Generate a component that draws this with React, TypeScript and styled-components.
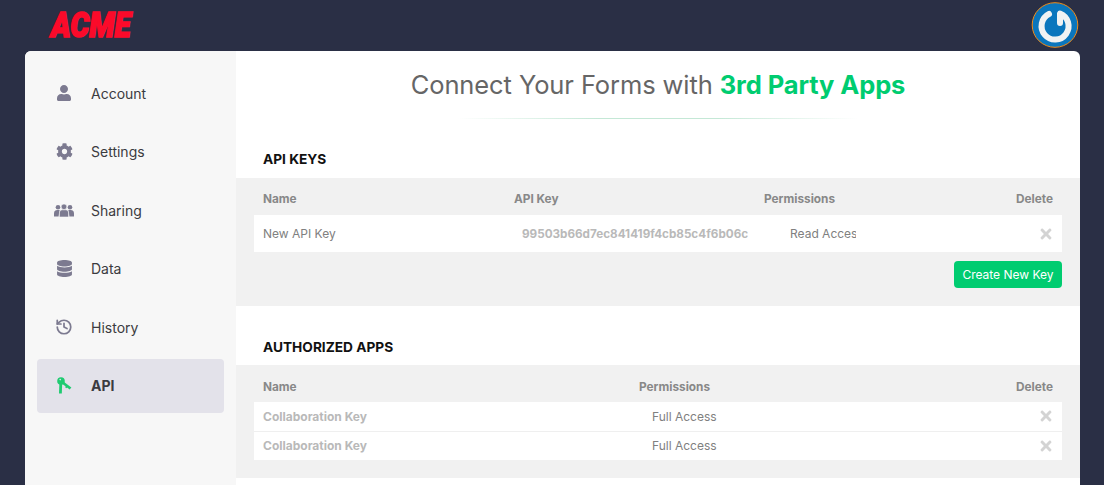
import React from 'react';
import styled, { createGlobalStyle } from 'styled-components';
import { FaCog, FaDatabase, FaTimes, FaUser } from 'react-icons/fa';
import { History } from 'lucide-react';

const GlobalStyle = createGlobalStyle`
    html, body {
        margin: 0;
        height: 100%;
        overflow: hidden;
        background: #2a2f45;
        font-family: Inter, "Noto Sans", sans-serif;
    }
`;

const SharingIcon = () => (
    <svg width="20" height="13" viewBox="0 0 20 13" fill="currentColor">
        <circle cx="4" cy="3.2" r="2.3" />
        <circle cx="16" cy="3.2" r="2.3" />
        <path d="M0 12.5V9.2C0 7 1.6 6 3.2 6h2.4L4.6 12.5z" />
        <path d="M20 12.5V9.2C20 7 18.4 6 16.8 6h-2.4l1 6.500z" />
        <circle cx="10" cy="2.800" r="2.800" fill="currentColor" stroke="#f7f7f7" strokeWidth="0.6" />
        <path d="M5.400 13V9c0-2 1.600-3.200 3.200-3.200h2.800c1.600 0 3.200 1.200 3.200 3.200v4z" stroke="#f7f7f7" strokeWidth="0.6" />
    </svg>
);

const KeysIcon = () => (
    <svg width="15" height="17" viewBox="0 0 15 17" fill="currentColor" stroke="currentColor">
        <circle cx="4" cy="4" r="3.800" stroke="none" />
        <path d="M5 5l8.500 6.500" strokeWidth="2.800" />
        <path d="M3.800 6l-.4 10.500" strokeWidth="2.800" />
        <path d="M10 9l-1.200 1.800" strokeWidth="1.600" />
        <circle cx="3.200" cy="2.600" r="0.800" fill="#e3e2ea" stroke="none" />
    </svg>
);

const PowerLogo = () => (
    <svg width="48" height="46" viewBox="0 0 48 46">
        <ellipse cx="24" cy="23" rx="22.8" ry="22.300" fill="#0a76bd" stroke="#f08c1a" strokeWidth="1" />
        <path d="M18 12A13.500 13.500 0 1 0 29 11.500V21" fill="none" stroke="#f0f2f3" strokeWidth="6" strokeLinecap="round" strokeLinejoin="round" />
    </svg>
);

const navItems = [
    { label: 'Account', icon: <FaUser size={16} /> },
    { label: 'Settings', icon: <FaCog size={17} /> },
    { label: 'Sharing', icon: <SharingIcon /> },
    { label: 'Data', icon: <FaDatabase size={17} /> },
    { label: 'History', icon: <History size={18} strokeWidth={2.3} /> },
    { label: 'API', icon: <KeysIcon />, active: true },
];

const App = () => (
    <>
        <GlobalStyle />
        <Page>
            <TopBar>
                <Logo>ACME</Logo>
                <Avatar>
                    <PowerLogo />
                </Avatar>
            </TopBar>
            <Card>
                <Sidebar>
                    {navItems.map((item) => (
                        <NavItem key={item.label} $active={item.active}>
                            <NavIcon $active={item.active}>{item.icon}</NavIcon>
                            {item.label}
                        </NavItem>
                    ))}
                </Sidebar>
                <Main>
                    <Title>
                        Connect Your Forms with <strong>3rd Party Apps</strong>
                    </Title>
                    <Divider />
                    <SectionTitle>API KEYS</SectionTitle>
                    <Panel $height={128}>
                        <Table $top={9}>
                            <HeadRow $columns="251px 250px 1fr auto" $bottom={4}>
                                <span>Name</span>
                                <span>API Key</span>
                                <span>Permissions</span>
                                <span>Delete</span>
                            </HeadRow>
                            <Row $columns="259px 268px 1fr auto" $height={37}>
                                <NameCell>New API Key</NameCell>
                                <KeyCell>99503b66d7ec841419f4cb85c4f6b06c</KeyCell>
                                <ClippedCell>Read Access</ClippedCell>
                                <DeleteIcon />
                            </Row>
                        </Table>
                        <Actions>
                            <CreateButton>Create New Key</CreateButton>
                        </Actions>
                    </Panel>
                    <SectionTitle $top={33}>AUTHORIZED APPS</SectionTitle>
                    <Panel $height={113}>
                        <Table $top={10}>
                            <HeadRow $columns="376px 1fr auto" $bottom={3}>
                                <span>Name</span>
                                <span>Permissions</span>
                                <span>Delete</span>
                            </HeadRow>
                            <Row $columns="389px 1fr auto" $height={30} $compact $divided>
                                <KeyName>Collaboration Key</KeyName>
                                <NameCell>Full Access</NameCell>
                                <DeleteIcon />
                            </Row>
                            <Row $columns="389px 1fr auto" $height={28} $compact>
                                <KeyName>Collaboration Key</KeyName>
                                <NameCell>Full Access</NameCell>
                                <DeleteIcon />
                            </Row>
                        </Table>
                    </Panel>
                </Main>
            </Card>
        </Page>
    </>
);

const Page = styled.div`
    height: 485px;
    overflow: hidden;
    background: #2a2f45;
`;

const TopBar = styled.header`
    height: 51px;
    display: flex;
    justify-content: space-between;
    padding: 0 25px 0 51px;
`;

const Logo = styled.div`
    width: 82px;
    height: 51px;
    color: #fb0a2a;
    font-family: Roboto, sans-serif;
    font-size: 35px;
    font-weight: 900;
    font-style: italic;
    line-height: 51px;
    -webkit-text-stroke: 1.6px #fb0a2a;
    transform: scaleX(0.85);
    transform-origin: left center;
`;

const Avatar = styled.div`
    padding-top: 2px;
`;

const Card = styled.div`
    display: flex;
    height: 434px;
    margin: 0 24px 0 25px;
    border-radius: 6px 6px 0 0;
    overflow: hidden;
    background: #fff;
`;

const Sidebar = styled.nav`
    width: 187px;
    flex-shrink: 0;
    display: flex;
    flex-direction: column;
    gap: 4.5px;
    padding: 15px 12px;
    background: #f7f7f7;
`;

const NavItem = styled.div<{ $active?: boolean }>`
    height: 54px;
    display: flex;
    align-items: center;
    padding-left: 15px;
    border-radius: 4px;
    background: ${({ $active }) => ($active ? '#e3e2ea' : 'transparent')};
    color: #3b3b40;
    font-size: 14px;
    font-weight: ${({ $active }) => ($active ? 700 : 400)};
`;

const NavIcon = styled.span<{ $active?: boolean }>`
    width: 24px;
    margin-right: 15px;
    display: flex;
    justify-content: center;
    color: ${({ $active }) => ($active ? '#1fcb71' : '#7c7a90')};
`;

const Main = styled.main`
    flex: 1;
    min-width: 0;
`;

const Title = styled.h1`
    margin: 0;
    padding-top: 17px;
    height: 49px;
    box-sizing: border-box;
    text-align: center;
    color: #666;
    font-size: 25.5px;
    line-height: 33px;
    font-weight: 400;
    letter-spacing: -0.1px;

    strong {
        color: #00cc70;
        font-weight: 700;
    }
`;

const Divider = styled.div`
    width: 400px;
    height: 1px;
    margin: 18px auto 0;
    background: linear-gradient(90deg, transparent, #c4e8d6 35%, #c4e8d6 65%, transparent);
`;

const SectionTitle = styled.h2<{ $top?: number }>`
    margin: ${({ $top }) => $top ?? 32}px 0 ${({ $top }) => ($top ? 9 : 10)}px 27px;
    color: #111;
    font-size: 13.7px;
    line-height: 17px;
    font-weight: 700;
`;

const Panel = styled.section<{ $height: number }>`
    height: ${({ $height }) => $height}px;
    padding: 0 18px;
    background: #f1f1f1;
`;

const Table = styled.div<{ $top: number }>`
    padding-top: ${({ $top }) => $top}px;
`;

const HeadRow = styled.div<{ $columns: string; $bottom: number }>`
    display: grid;
    grid-template-columns: ${({ $columns }) => $columns};
    height: 24px;
    padding: 0 9px ${({ $bottom }) => $bottom}px;
    align-items: center;
    color: #888;
    font-size: 11.8px;
    font-weight: 700;
`;

const Row = styled.div<{ $columns: string; $height: number; $divided?: boolean; $compact?: boolean }>`
    display: grid;
    grid-template-columns: ${({ $columns }) => $columns};
    height: ${({ $height }) => $height}px;
    box-sizing: border-box;
    padding: 0 8px ${({ $compact }) => ($compact ? 1 : 0)}px 9px;
    align-items: center;
    background: #fff;
    border-bottom: ${({ $divided }) => ($divided ? '1px solid #efefef' : 'none')};
    font-size: 12px;
`;

const NameCell = styled.span`
    color: #808080;
`;

const KeyName = styled.span`
    color: #b9b9b9;
    font-weight: 700;
`;

const KeyCell = styled.span`
    color: #b9b9b9;
    font-size: 11.7px;
    font-weight: 700;
    white-space: nowrap;
    overflow: hidden;
`;

const ClippedCell = styled.span`
    width: 66px;
    overflow: hidden;
    white-space: nowrap;
    color: #808080;
`;

const DeleteIcon = styled(FaTimes)`
    width: 16px;
    height: 16px;
    color: #d3d3d3;
`;

const Actions = styled.div`
    display: flex;
    justify-content: flex-end;
    padding-top: 9px;
`;

const CreateButton = styled.button`
    width: 108px;
    height: 27px;
    padding: 0;
    border: none;
    border-radius: 4px;
    background: #00cc70;
    color: #fff;
    font-family: inherit;
    font-size: 12px;
`;

export default App;
